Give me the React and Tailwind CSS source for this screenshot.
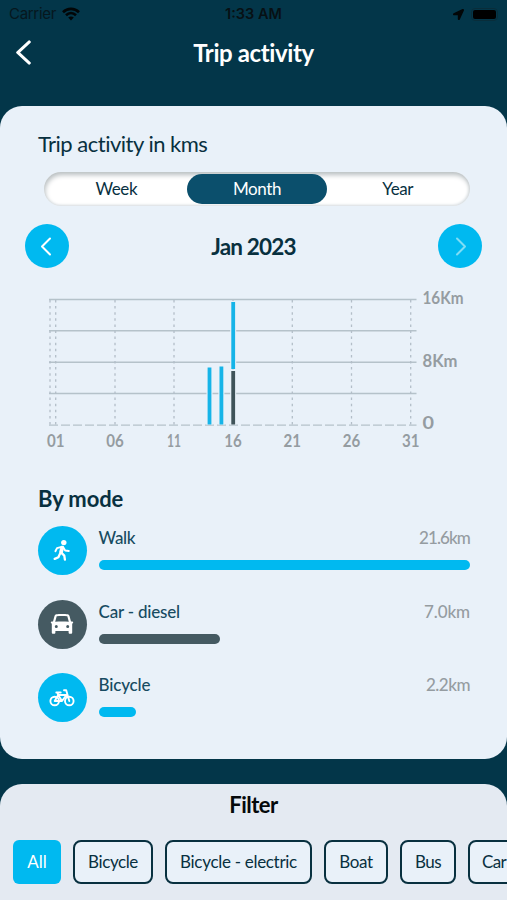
import { FaLocationArrow } from 'react-icons/fa';

const WalkIcon = () => (
  <svg width="24" height="24" viewBox="0 0 24 24" fill="none" stroke="currentColor" strokeLinecap="round" strokeLinejoin="round">
    <circle cx="13.8" cy="3.6" r="2.7" fill="currentColor" stroke="none" />
    <path d="M12.3 8.600 11 13.300" strokeWidth="3.800" />
    <path d="M11.600 7.800 7 9.100 5.400 12.200M13.300 8.400l1.900 3.100 3.600.5" strokeWidth="1.900" />
    <path d="m11.300 13.600 3 3 .6 4M10 14.600l-1.600 3.600-3.700 1.700" strokeWidth="2.300" />
  </svg>
);

const CarIcon = () => (
  <svg width="24" height="24" viewBox="0 0 24 24" fill="currentColor">
    <path
      fillRule="evenodd"
      d="M6.200 2.300C9 1.800 15 1.800 17.800 2.300c.9.2 1.500.9 1.700 1.700l1.500 5.600h1.300c.8 0 1.100.8.7 1.300l-.8.800V20.500c0 .8-.5 1.300-1.300 1.300h-1c-.8 0-1.300-.5-1.300-1.300v-1.500H5.400v1.500c0 .8-.5 1.300-1.300 1.300h-1c-.8 0-1.300-.5-1.300-1.300V11.700l-.8-.8c-.4-.5-.1-1.300.7-1.300H3l1.500-5.600c.2-.8.800-1.500 1.700-1.700zM6.700 4.200 5.200 9.800c4-.5 9.600-.5 13.600 0L17.300 4.200c-3.200-.4-7.400-.4-10.600 0zM6.300 12.900a1.500 1.500 0 1 0 0 3 1.500 1.500 0 0 0 0-3zm11.400 0a1.500 1.500 0 1 0 0 3 1.500 1.500 0 0 0 0-3z"
    />
  </svg>
);

const BikeIcon = () => (
  <svg width="26" height="20" viewBox="0 0 26 20" fill="none" stroke="currentColor" strokeWidth="1.900" strokeLinecap="round" strokeLinejoin="round">
    <circle cx="5.700" cy="13" r="4.300" />
    <circle cx="20.300" cy="13" r="4.300" />
    <path d="M5.700 13 9.200 7h8.300L13 13H5.700M9.200 7 13 13M15 2.300h2.200L20.300 13" />
    <path d="M7.300 4.500h4.400M9.200 7 8.500 4.500" />
  </svg>
);

const Chevron = ({ flip, className, width = 12, height = 19, stroke = 2 }) => (
  <svg width={width} height={height} viewBox="0 0 12 19" fill="none" preserveAspectRatio="none" className={className}>
    <path
      d={flip ? 'M2 1.500 10 9.500 2 17.500' : 'M10 1.500 2 9.500 10 17.500'}
      stroke="currentColor"
      strokeWidth={stroke}
      strokeLinecap="round"
      strokeLinejoin="round"
    />
  </svg>
);

const days = [
  { label: '01', x: 55.7 },
  { label: '06', x: 115 },
  { label: '11', x: 174 },
  { label: '16', x: 233 },
  { label: '21', x: 292.3 },
  { label: '26', x: 351.5 },
  { label: '31', x: 410.7 },
];

const bars = [
  { x: 209.5, y: 87.5, h: 57, color: '#16b4e8' },
  { x: 221.4, y: 86.5, h: 58, color: '#16b4e8' },
  { x: 233.2, y: 22, h: 67, color: '#16b4e8' },
  { x: 233.2, y: 91, h: 53.5, color: '#3f5359' },
];

const modes = [
  { name: 'Walk', km: '21.6km', width: 371, color: 'bg-[#00b9f0]', icon: <WalkIcon />, tracking: 'tracking-[-0.3px]', kmTracking: 'tracking-[-0.9px]' },
  { name: 'Car - diesel', km: '7.0km', width: 121, color: 'bg-[#455a62]', icon: <CarIcon />, tracking: 'tracking-[-0.2px]', kmTracking: 'tracking-[-0.1px]' },
  { name: 'Bicycle', km: '2.2km', width: 37, color: 'bg-[#00b9f0]', icon: <BikeIcon />, tracking: 'tracking-[-0.15px]', kmTracking: 'tracking-[-0.5px]' },
];

const filters = [
  { name: 'Bicycle', size: 'w-20 tracking-[-0.4px]' },
  { name: 'Bicycle - electric', size: 'w-[147px] tracking-[-0.3px]' },
  { name: 'Boat', size: 'w-16 tracking-[-0.4px]' },
  { name: 'Bus', size: 'w-14 tracking-[-0.5px]' },
];

const TripChart = () => (
  <svg width="507" height="180" className="block text-[16.5px] font-bold" fill="#959ca1">
    {[19.5, 50.8, 82.2, 113.6].map((y) => (
      <line key={y} x1="49" x2="416.5" y1={y} y2={y} stroke="#b5c2ca" strokeWidth="1.5" />
    ))}
    <line x1="49" x2="416.5" y1="145.2" y2="145.2" stroke="#b5c2ca" strokeWidth="1.3" strokeDasharray="9 3" />
    {[50, ...days.map((d) => d.x)].map((x) => (
      <line key={x} x1={x} x2={x} y1="20" y2="145" stroke="#b3bec8" strokeWidth="1.3" strokeDasharray="2.5 3.6" />
    ))}
    {bars.map((b, i) => (
      <g key={i}>
        <rect x={b.x - 3} y={b.y - 1} width="6" height={b.h + 1} fill="#e9f2f9" />
        <rect x={b.x - 1.9} y={b.y} width="3.8" height={b.h} fill={b.color} />
      </g>
    ))}
    {days.map((d) => (
      <text
        key={d.label}
        x={d.x}
        y="167"
        textAnchor="middle"
        textLength={d.label === '11' ? 14 : 17.5}
        lengthAdjust="spacingAndGlyphs"
      >
        {d.label}
      </text>
    ))}
    <text x="422.5" y="24" textLength="41" lengthAdjust="spacingAndGlyphs">16Km</text>
    <text x="422.5" y="87" textLength="35" lengthAdjust="spacingAndGlyphs">8Km</text>
    <text x="422.5" y="149" textLength="11.5" lengthAdjust="spacingAndGlyphs">0</text>
  </svg>
);

const App = () => {
  return (
    <div className="w-[507px] h-[900px] overflow-hidden flex flex-col bg-[#033649] font-['Lato',sans-serif] text-[#08303f]">
      {/* Status bar */}
      <div className="h-7 grid grid-cols-3 items-center pl-[9px] pr-[9px] text-[15px] leading-7 text-[#071014] font-['Inter',sans-serif]">
        <div className="flex items-center gap-[6px]">
          <span className="tracking-[-0.3px] opacity-80">Carrier</span>
          <svg width="18" height="14" viewBox="0 0 18 14" fill="none" stroke="#020607" strokeWidth="2.6">
            <path d="M1 5.200C5.500.8 12.500.8 17 5.200M4 8.300c3-2.900 7-2.900 10 0" />
            <path d="M9 13.500 6.200 10.600c1.600-1.500 4-1.500 5.600 0z" fill="#020607" stroke="none" />
          </svg>
        </div>
        <div className="text-center font-semibold text-[14.5px]">1:33 AM</div>
        <div className="flex justify-end items-center gap-[7px] text-[#020607]">
          <FaLocationArrow size={11} />
          <div className="h-[13px] w-[27px] rounded-[4px] border border-[#092d3a] p-px flex">
            <div className="w-[23px] rounded-[2px] bg-black" />
          </div>
        </div>
      </div>

      {/* Header */}
      <div className="h-[78px] shrink-0 grid grid-cols-[1fr_auto_1fr] items-start">
        <Chevron className="text-white ml-[15px] mt-3" width={17} height={25} stroke={2.3} />
        <h1 className="text-[24px] leading-[50px] font-bold text-white tracking-[-0.4px]">Trip activity</h1>
      </div>

      {/* Activity card */}
      <div className="h-[653px] shrink-0 rounded-[22px] bg-[#e9f1f9]">
        <h2 className="pl-[38px] pt-[22px] text-[22px] leading-8 tracking-[-0.5px]">Trip activity in kms</h2>
        <div className="ml-11 mt-3 w-[426px] h-[34px] px-0.5 flex items-center rounded-full bg-white shadow-[inset_1px_3px_5px_#b8bec0,inset_-1px_-1px_3px_#d9dfe3] text-[17px] leading-[30px] text-center tracking-[-0.4px]">
          <div className="w-[141px]">Week</div>
          <div className="w-[141px] rounded-full bg-[#0b4f6c] text-white">Month</div>
          <div className="w-[141px]">Year</div>
        </div>

        <div className="mt-[18px] px-[25px] h-11 flex items-center justify-between">
          <button className="size-11 rounded-full bg-[#00b9f0] text-white flex items-center justify-center">
            <Chevron className="-ml-0.5" />
          </button>
          <div className="text-[22.5px] font-bold tracking-[-0.8px] pt-0.5">Jan 2023</div>
          <button className="size-11 rounded-full bg-[#00b9f0] text-[#80ddf5] flex items-center justify-center">
            <Chevron flip className="ml-0.5" />
          </button>
        </div>

        <div className="mt-[12px]">
          <TripChart />
        </div>

        <h2 className="pl-[38px] mt-[23px] text-[22px] leading-8 font-bold tracking-[-0.1px]">By mode</h2>
        <div className="mt-[11px] flex flex-col gap-6 pl-[37.5px]">
          {modes.map((mode) => (
            <div key={mode.name} className="flex h-[49.5px]">
              <div className={`size-[49px] shrink-0 rounded-full text-white flex items-center justify-center ${mode.color}`}>
                {mode.icon}
              </div>
              <div className="ml-3 w-[371.5px]">
                <div className="flex justify-between text-[17px] leading-[23px] font-medium">
                  <span className={`text-[#174b61] ${mode.tracking}`}>{mode.name}</span>
                  <span className={`text-[#959ca1] ${mode.kmTracking}`}>{mode.km}</span>
                </div>
                <div className={`mt-[11px] h-2.5 rounded-full ${mode.color}`} style={{ width: mode.width }} />
              </div>
            </div>
          ))}
        </div>
      </div>

      {/* Filter */}
      <div className="mt-[25px] h-[116px] shrink-0 rounded-t-[22px] bg-[#e4eaf2]">
        <h2 className="text-center text-[22px] leading-[42px] font-bold text-[#05090b] tracking-[-0.5px]">Filter</h2>
        <div className="mt-3.5 pl-[13px] flex gap-3 text-[17px] whitespace-nowrap overflow-hidden">
          <button className="w-12 h-11 shrink-0 rounded-md bg-[#00b9f0] text-white">All</button>
          {filters.map((f) => (
            <button key={f.name} className={`h-11 shrink-0 rounded-lg border-[2.5px] border-[#08303f] bg-[#e9f1f9] ${f.size}`}>
              {f.name}
            </button>
          ))}
          <button className="w-20 h-11 shrink-0 rounded-lg border-[2.5px] border-[#08303f] bg-[#e9f1f9] pl-3 text-left tracking-[-0.6px]">Car</button>
        </div>
      </div>
    </div>
  );
};

export default App;
